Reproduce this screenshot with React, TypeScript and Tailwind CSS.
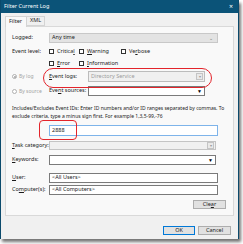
const font = { fontFamily: '"Noto Sans", "Liberation Sans", sans-serif' };

const Check = ({ children }: { children: React.ReactNode }) => (
  <div className="flex items-center gap-[3px]">
    <div className="h-[5px] w-[5px] border border-[#333] bg-white" />
    <span>{children}</span>
  </div>
);

const GreyArrow = () => (
  <div className="flex h-[7px] w-[7px] items-center justify-center border border-[#c4c4c4] bg-[#e9e9e9] text-[4px] text-[#999]">
    ▾
  </div>
);

const App = () => {
  return (
    <div className="h-[244px] w-[243px] bg-white" style={font}>
      <div className="relative flex h-[239px] w-[239px] flex-col border-x border-[#0b4a6c] bg-[#f0f0f0] text-[5.5px] leading-none text-[#1b1b1b] shadow-[2px_3px_3px_rgba(0,0,0,0.55)]">
        {/* title bar */}
        <div className="flex h-[13px] items-center justify-between bg-[#0b5378] pl-[3px] pr-[5px] text-white">
          <span className="text-[5.5px]">Filter Current Log</span>
          <span className="text-[7px]">×</span>
        </div>

        <div className="px-[4px] pt-[2px]">
          {/* tabs */}
          <div className="flex h-[11px] items-end">
            <div className="relative z-10 -mb-px flex h-[11px] w-[22px] items-center border border-b-0 border-[#d4d4d4] bg-[#f9f9f9] pl-[3px]">
              Filter
            </div>
            <div className="flex h-[10px] w-[18px] items-center border border-l-0 border-[#d4d4d4] bg-[#f0f0f0] pl-[3px]">
              XML
            </div>
          </div>

          {/* panel */}
          <div className="relative border border-[#d9d9d9] bg-[#f9f9f9] pb-[6px] pl-[6px]">
            <div className="mt-[6px] flex h-[10px] items-center">
              <span className="w-[37px]">Logged:</span>
              <div className="flex h-[10px] w-[169px] items-center justify-between border border-[#c8c8c8] bg-[#e3e3e3] pl-[2px] pr-[4px]">
                <span>Any time</span>
                <span className="text-[5px] text-[#777]">⌄</span>
              </div>
            </div>

            <div className="mt-[5px] flex h-[7px] items-center">
              <span className="w-[37px]">Event level:</span>
              <div className="w-[30px]">
                <Check>
                  Critica<u>l</u>
                </Check>
              </div>
              <div className="w-[42px]">
                <Check>
                  <u>W</u>arning
                </Check>
              </div>
              <Check>
                Ve<u>r</u>bose
              </Check>
            </div>

            <div className="mt-[5px] flex h-[7px] items-center pl-[37px]">
              <div className="w-[30px]">
                <Check>
                  <u>E</u>rror
                </Check>
              </div>
              <Check>
                <u>I</u>nformation
              </Check>
            </div>

            <div className="mt-[4px] flex h-[11px] items-center">
              <div className="flex w-[37px] items-center gap-[2px] text-[#a3a3a3]">
                <div className="flex h-[5px] w-[5px] items-center justify-center rounded-full border border-[#b0b0b0] bg-white">
                  <div className="h-[2px] w-[2px] rounded-full bg-[#a0a0a0]" />
                </div>
                <span className="text-[5px]">By log</span>
              </div>
              <span className="w-[39px]">
                <u>E</u>vent logs:
              </span>
              <div className="flex h-[11px] w-[117px] items-center justify-between border border-[#bcbcbc] bg-[#f0f0f0] pl-[2px] pr-px text-[#9c9c9c]">
                <span>Directory Service</span>
                <GreyArrow />
              </div>
            </div>

            <div className="mt-[4px] flex h-[10px] items-center">
              <div className="flex w-[37px] items-center gap-[2px] text-[#a3a3a3]">
                <div className="h-[5px] w-[5px] rounded-full border border-[#b0b0b0] bg-white" />
                <span className="text-[5px]">By source</span>
              </div>
              <span className="w-[39px]">
                Eve<u>n</u>t sources:
              </span>
              <div className="flex h-[10px] w-[117px] items-center justify-end border border-[#7a7a7a] bg-white pr-[2px]">
                <span className="text-[5px] text-black">▼</span>
              </div>
            </div>

            <p className="mt-[8px] w-[220px] text-[5px] leading-[8px]">
              Includes/Excludes Event IDs: Enter ID numbers and/or ID ranges separated by commas. To exclude criteria, type a minus sign first. For example 1,3,5-99,-76
            </p>

            <div className="mt-[5px] flex h-[11px] items-center pl-[37px]">
              <div className="flex h-[11px] w-[169px] items-center border border-[#7eb4ea] bg-white pl-[2px]">
                2888
              </div>
            </div>

            <div className="mt-[5px] flex h-[9px] items-center">
              <span className="w-[37px]">
                <u>T</u>ask category:
              </span>
              <div className="flex h-[9px] w-[167px] items-center justify-end border border-[#c4c4c4] bg-[#f0f0f0] pr-px">
                <GreyArrow />
              </div>
            </div>

            <div className="mt-[5px] flex h-[10px] items-center">
              <span className="w-[37px]">
                <u>K</u>eywords:
              </span>
              <div className="flex h-[10px] w-[167px] items-center justify-end border border-[#7a7a7a] bg-white pr-[2px]">
                <span className="text-[5px] text-black">▼</span>
              </div>
            </div>

            <div className="mt-[8px] flex h-[10px] items-center">
              <span className="w-[37px]">
                <u>U</u>ser:
              </span>
              <div className="flex h-[10px] w-[169px] items-center border border-[#7a7a7a] bg-white pl-[2px]">
                &lt;All Users&gt;
              </div>
            </div>

            <div className="mt-[2px] flex h-[10px] items-center">
              <span className="w-[37px]">
                Co<u>m</u>puter(s):
              </span>
              <div className="flex h-[10px] w-[169px] items-center border border-[#7a7a7a] bg-white pl-[2px]">
                &lt;All Computers&gt;
              </div>
            </div>

            <div className="mt-[5px] flex h-[9px] justify-end pr-[7px]">
              <div className="flex h-[9px] w-[33px] items-center justify-center border border-[#adadad] bg-[#e1e1e1]">
                Cle<u>a</u>r
              </div>
            </div>

            {/* annotations */}
            <div className="absolute left-[37px] top-[41px] h-[20px] w-[169px] rounded-[10px] border-[1.5px] border-[#e3242b]" />
            <div className="absolute left-[33px] top-[93px] h-[20px] w-[38px] rounded-[4px] border-[1.5px] border-[#e3242b]" />
          </div>

          {/* footer */}
          <div className="mt-[10px] flex justify-end gap-[3px] pr-[3px]">
            <div className="flex h-[9px] w-[32px] items-center justify-center border border-[#0078d7] bg-[#e1e1e1]">
              OK
            </div>
            <div className="flex h-[9px] w-[33px] items-center justify-center border border-[#adadad] bg-[#e1e1e1]">
              Cancel
            </div>
          </div>
        </div>
      </div>
    </div>
  );
};

export default App;
